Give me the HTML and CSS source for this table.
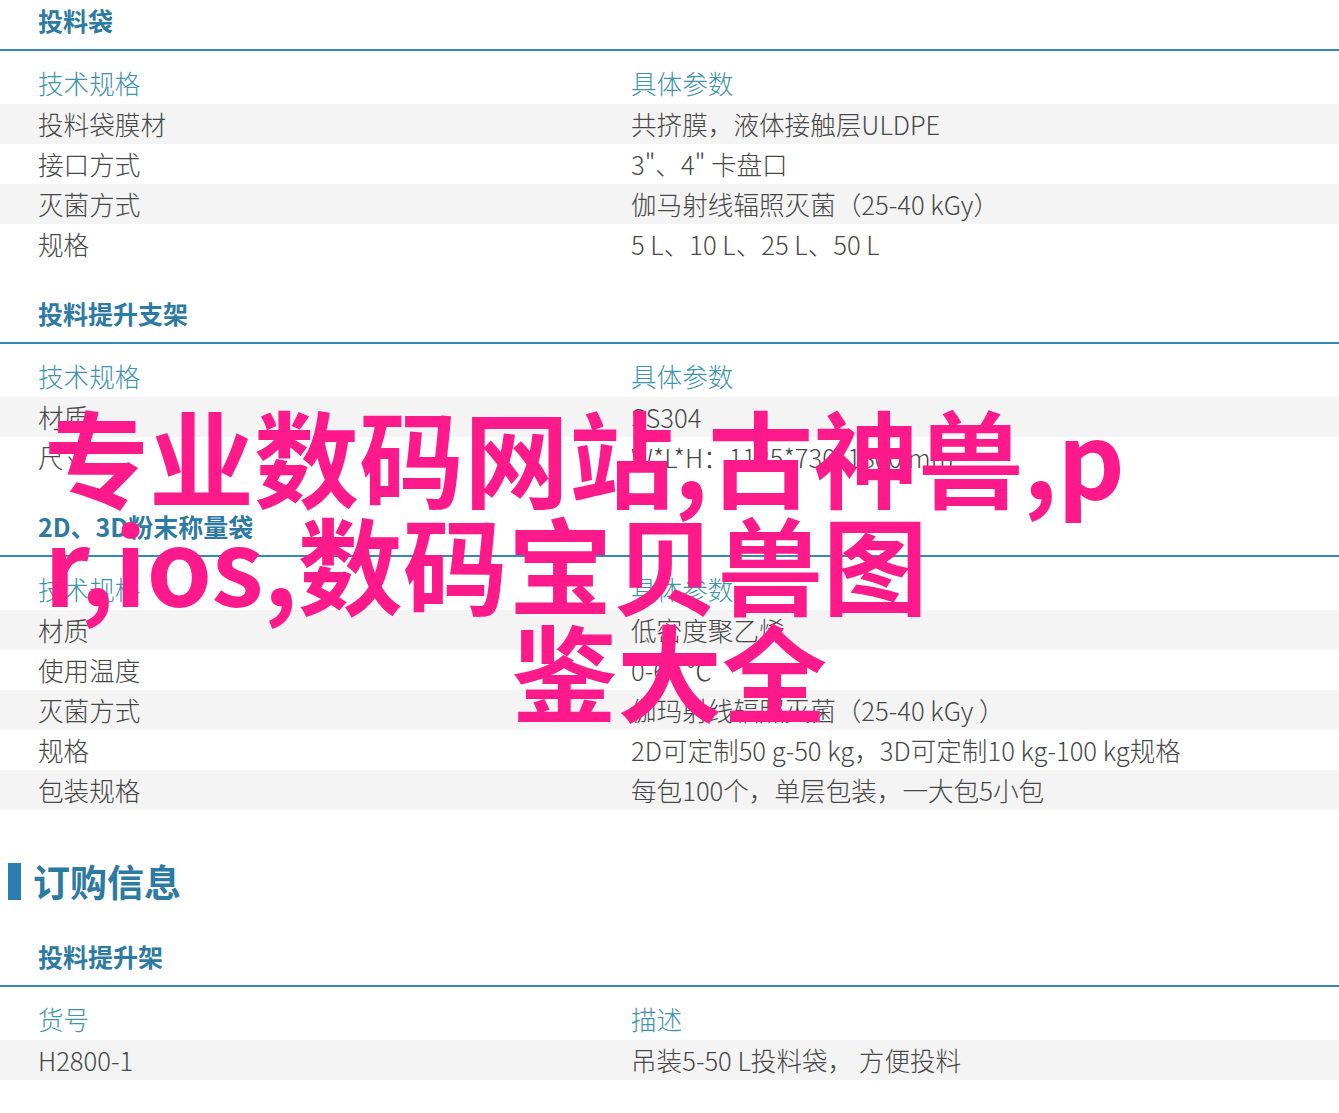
FILE: index.html
```html
<!DOCTYPE html>
<html lang="zh-CN">
<head>
<meta charset="utf-8">
<title>投料袋 技术规格</title>
<link rel="stylesheet" href="styles.css">
</head>
<body>
<main class="page">
  <section class="spec">
    <h3 class="spec-title">投料袋</h3>
    <div class="spec-table">
      <div class="row head"><div class="cell">技术规格</div><div class="cell">具体参数</div></div>
      <div class="row alt"><div class="cell">投料袋膜材</div><div class="cell">共挤膜，液体接触层ULDPE</div></div>
      <div class="row"><div class="cell">接口方式</div><div class="cell">3"、4" 卡盘口</div></div>
      <div class="row alt"><div class="cell">灭菌方式</div><div class="cell">伽马射线辐照灭菌（25-40 kGy）</div></div>
      <div class="row"><div class="cell">规格</div><div class="cell">5 L、10 L、25 L、50 L</div></div>
    </div>
  </section>

  <section class="spec spec-next">
    <h3 class="spec-title">投料提升支架</h3>
    <div class="spec-table">
      <div class="row head"><div class="cell">技术规格</div><div class="cell">具体参数</div></div>
      <div class="row alt"><div class="cell">材质</div><div class="cell">SS304</div></div>
      <div class="row"><div class="cell">尺寸</div><div class="cell">W*L*H：1125*730*1800 mm</div></div>
    </div>
  </section>

  <section class="spec spec-next">
    <h3 class="spec-title">2D、3D粉末称量袋</h3>
    <div class="spec-table">
      <div class="row head"><div class="cell">技术规格</div><div class="cell">具体参数</div></div>
      <div class="row alt"><div class="cell">材质</div><div class="cell">低密度聚乙烯</div></div>
      <div class="row"><div class="cell">使用温度</div><div class="cell">0-60 ℃</div></div>
      <div class="row alt"><div class="cell">灭菌方式</div><div class="cell">伽玛射线辐照灭菌（25-40 kGy ）</div></div>
      <div class="row"><div class="cell">规格</div><div class="cell">2D可定制50 g-50 kg，3D可定制10 kg-100 kg规格</div></div>
      <div class="row alt"><div class="cell">包装规格</div><div class="cell">每包100个，单层包装，一大包5小包</div></div>
    </div>
  </section>

  <h2 class="order-heading">订购信息</h2>

  <section class="spec">
    <h3 class="spec-title">投料提升架</h3>
    <div class="spec-table">
      <div class="row head"><div class="cell">货号</div><div class="cell">描述</div></div>
      <div class="row alt"><div class="cell">H2800-1</div><div class="cell">吊装5-50 L投料袋， 方便投料</div></div>
    </div>
  </section>

  <div class="overlay">
    <span class="overlay-line">专业数码网站,古神兽,p</span>
    <span class="overlay-line">r,ios,数码宝贝兽图</span>
    <span class="overlay-line overlay-center">鉴大全</span>
  </div>
</main>
</body>
</html>
```
FILE: styles.css
```css
html, body {
  margin: 0;
  padding: 0;
  background: #ffffff;
}

body {
  font-family: "Noto Sans CJK SC", "Noto Sans", sans-serif;
  color: #474747;
}

.page {
  position: relative;
  width: 1339px;
  min-height: 1113px;
  overflow: hidden;
}

.spec-title {
  margin: 0;
  padding: 0 38px 9px;
  font-size: 25px;
  line-height: 40px;
  font-weight: 700;
  color: #2d7aa2;
  border-bottom: 2px solid #3787b4;
}

.spec-next {
  margin-top: 29px;
}

.row {
  display: grid;
  grid-template-columns: 593px 1fr;
  padding-left: 38px;
  height: 40px;
  font-size: 25.6px;
  line-height: 40px;
  font-weight: 300;
  white-space: nowrap;
}

.row.head {
  padding-top: 12px;
  padding-bottom: 1px;
  color: #3f93ad;
}

.row.alt {
  background: #f4f4f4;
}

.order-heading {
  display: flex;
  align-items: center;
  gap: 12px;
  margin: 46px 0 30px;
  padding-left: 8px;
  font-size: 37px;
  line-height: 50px;
  font-weight: 700;
  color: #2d7aa2;
}

.order-heading::before {
  content: "";
  width: 13px;
  height: 37px;
  background: #2b7fb0;
}

.overlay {
  position: absolute;
  top: 401px;
  left: 0;
  right: 0;
  font-size: 105px;
  line-height: 107px;
  font-weight: 700;
  color: #ff1a8c;
  white-space: nowrap;
}

.overlay-line {
  display: block;
  padding-left: 44px;
}

.overlay-center {
  padding-left: 0;
  text-align: center;
}
```
